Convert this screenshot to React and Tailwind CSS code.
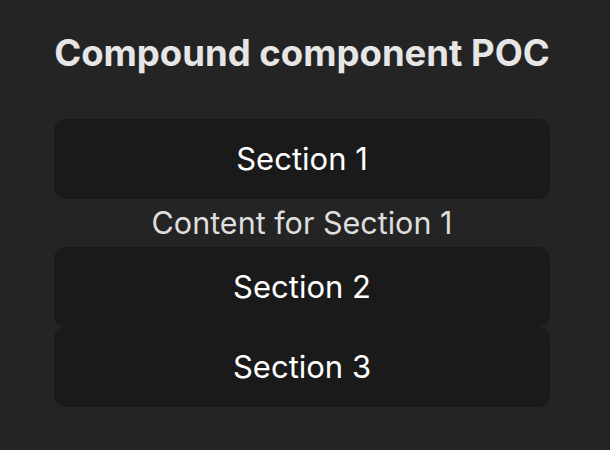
import React from 'react';

const sections = [
    { id: 1, title: 'Section 1', content: 'Content for Section 1', open: true },
    { id: 2, title: 'Section 2', content: 'Content for Section 2', open: false },
    { id: 3, title: 'Section 3', content: 'Content for Section 3', open: false },
];

const App = () => {
    return (
        <div className="min-h-screen bg-[#242424] flex flex-col items-center pt-[32px] pr-[6px]" style={{ fontFamily: 'Inter, "Noto Sans", sans-serif' }}>
            <h1 className="text-[36.5px] leading-[42px] font-bold text-[#e6e6e6]">Compound component POC</h1>

            <div className="w-[496px] mt-[45px] flex flex-col">
                {sections.map((s) => (
                    <div key={s.id} className="flex flex-col">
                        <button className="h-[80px] w-full rounded-[12px] bg-[#1a1a1a] text-white text-[31px] pt-[1px]">
                            {s.title}
                        </button>
                        {s.open && (
                            <p className="h-[48px] flex items-center justify-center text-[30.5px] text-[#dedede]">
                                {s.content}
                            </p>
                        )}
                    </div>
                ))}
            </div>
        </div>
    );
};

export default App;
